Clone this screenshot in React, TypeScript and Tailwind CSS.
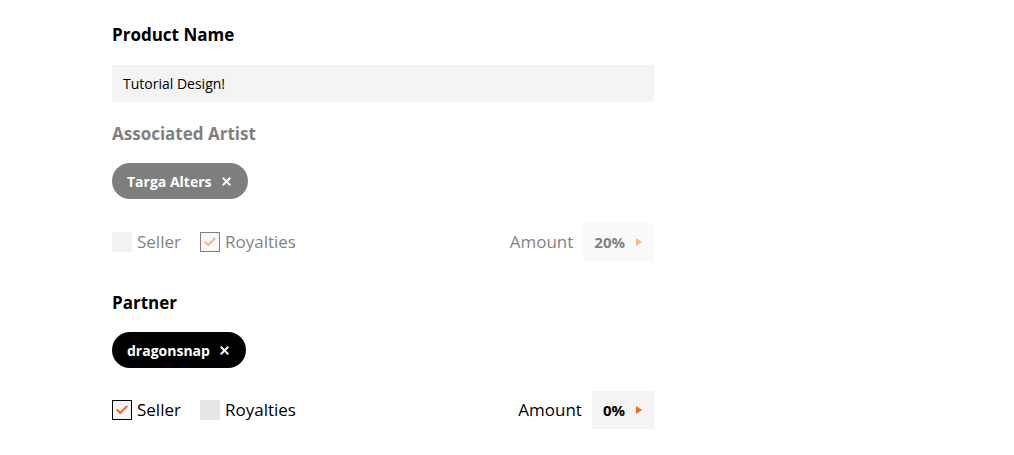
import { X, Check } from 'lucide-react';

type RowProps = {
    seller: boolean;
    royalties: boolean;
    amount: string;
};

function Checkbox({ checked, label }: { checked: boolean; label: string }) {
    return (
        <label className="flex items-center gap-[5px]">
            {checked ? (
                <span className="flex h-5 w-5 items-center justify-center border border-black bg-[#f4f4f4]">
                    <Check className="h-[14px] w-[14px] text-[#f26b1d]" strokeWidth={3.5} />
                </span>
            ) : (
                <span className="h-5 w-5 bg-[#e6e6e6]" />
            )}
            <span className="text-[17px] text-black">{label}</span>
        </label>
    );
}

function ShareRow({ seller, royalties, amount }: RowProps) {
    return (
        <div className="flex h-[38px] items-center justify-between">
            <div className="flex items-center gap-[19px]">
                <Checkbox checked={seller} label="Seller" />
                <Checkbox checked={royalties} label="Royalties" />
            </div>
            <div className="flex items-center gap-[10px]">
                <span className="text-[17px] text-black">Amount</span>
                <div className="flex h-[38px] items-center gap-[11px] bg-[#f4f4f4] pl-[11px] pr-[12px]">
                    <span className="text-[15px] font-bold text-black">{amount}</span>
                    <svg width="6" height="8" viewBox="0 0 6 8">
                        <path d="M0 0 L6 4 L0 8 Z" fill="#f26b1d" />
                    </svg>
                </div>
            </div>
        </div>
    );
}

function Chip({ name }: { name: string }) {
    return (
        <span className="inline-flex h-9 items-center gap-[8px] rounded-full bg-black pl-[15px] pr-[15px] text-[14px] font-bold text-white">
            {name}
            <X className="h-[13px] w-[13px]" strokeWidth={3.5} />
        </span>
    );
}

export default function App() {
    return (
        <div
            className="min-h-[455px] bg-white"
            style={{ fontFamily: '"Open Sans", "Noto Sans", sans-serif' }}
        >
            <div className="ml-[112px] w-[542px] pt-[24px]">
                {/* Product name */}
                <h2 className="text-[17px] font-bold leading-[22px] text-black">Product Name</h2>
                <div className="mt-[19px] flex h-[37px] items-center bg-[#f4f4f4] px-[11px] text-[14px] text-black">
                    Tutorial Design!
                </div>

                {/* Associated artist (disabled) */}
                <div className="opacity-50">
                    <h2 className="mt-[21px] text-[17px] font-bold leading-[22px] text-black">Associated Artist</h2>
                    <div className="mt-[18px]">
                        <Chip name="Targa Alters" />
                    </div>
                    <div className="mt-[24px]">
                        <ShareRow seller={false} royalties={true} amount="20%" />
                    </div>
                </div>

                {/* Partner */}
                <h2 className="mt-[31px] text-[17px] font-bold leading-[22px] text-black">Partner</h2>
                <div className="mt-[18px]">
                    <Chip name="dragonsnap" />
                </div>
                <div className="mt-[23px]">
                    <ShareRow seller={true} royalties={false} amount="0%" />
                </div>
            </div>
        </div>
    );
}
